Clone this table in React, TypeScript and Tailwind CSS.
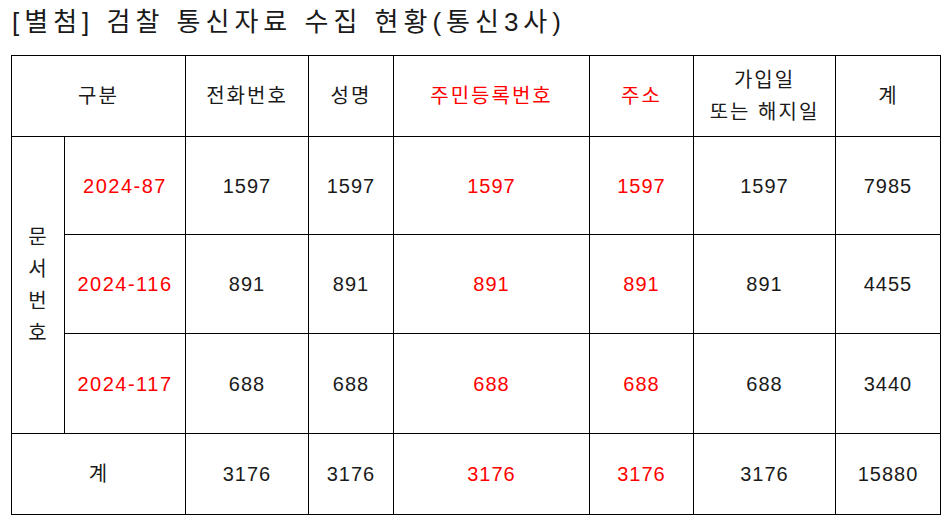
import React from 'react'

const font = { fontFamily: '"Liberation Sans", "Noto Sans CJK KR", sans-serif' }

const rows = [
  { id: '2024-87', vals: ['1597', '1597', '1597', '1597', '1597', '7985'], h: 'h-[98px]' },
  { id: '2024-116', vals: ['891', '891', '891', '891', '891', '4455'], h: 'h-[99px]' },
  { id: '2024-117', vals: ['688', '688', '688', '688', '688', '3440'], h: 'h-[100px]' },
]

// columns 3 and 4 of the data (주민등록번호, 주소) are in red
const isRed = (i: number) => i === 2 || i === 3

export default function App() {
  return (
    <div className="w-[949px] h-[520px] bg-white text-[#1a1a1a]" style={font}>
      {/* Title */}
      <div className="h-[55px] pl-[12px] pt-[6px] text-[26px] leading-[32px] tracking-[5px] whitespace-nowrap">
        [별첨] 검찰 통신자료 수집 현황(통신3사)
      </div>

      <div className="pl-[11px]">
        <table className="table-fixed border-collapse w-[929px] text-[20px] text-center tracking-[1px]">
          <colgroup>
            <col className="w-[53px]" />
            <col className="w-[121px]" />
            <col className="w-[123px]" />
            <col className="w-[85px]" />
            <col className="w-[196px]" />
            <col className="w-[104px]" />
            <col className="w-[142px]" />
            <col className="w-[105px]" />
          </colgroup>
          <tbody>
            {/* Header */}
            <tr className="h-[81px]">
              <td colSpan={2} className="border border-black tracking-[2px]">구분</td>
              <td className="border border-black tracking-[2px]">전화번호</td>
              <td className="border border-black tracking-[2px]">성명</td>
              <td className="border border-black tracking-[2px] text-[#ff0000]">주민등록번호</td>
              <td className="border border-black tracking-[2px] text-[#ff0000]">주소</td>
              <td className="border border-black tracking-[2px] leading-[32px]">
                가입일
                <br />
                또는 해지일
              </td>
              <td className="border border-black">계</td>
            </tr>

            {rows.map((r, ri) => (
              <tr key={r.id} className={r.h}>
                {ri === 0 && (
                  <td rowSpan={3} className="border border-black leading-[32px]">
                    문<br />서<br />번<br />호
                  </td>
                )}
                <td className="border border-black tracking-[1.5px] text-[#ff0000]">{r.id}</td>
                {r.vals.map((v, i) => (
                  <td
                    key={i}
                    className={`border border-black ${isRed(i) ? 'text-[#ff0000]' : ''}`}
                  >
                    {v}
                  </td>
                ))}
              </tr>
            ))}

            {/* Total */}
            <tr className="h-[81px]">
              <td colSpan={2} className="border border-black">계</td>
              <td className="border border-black">3176</td>
              <td className="border border-black">3176</td>
              <td className="border border-black text-[#ff0000]">3176</td>
              <td className="border border-black text-[#ff0000]">3176</td>
              <td className="border border-black">3176</td>
              <td className="border border-black">15880</td>
            </tr>
          </tbody>
        </table>
      </div>
    </div>
  )
}
